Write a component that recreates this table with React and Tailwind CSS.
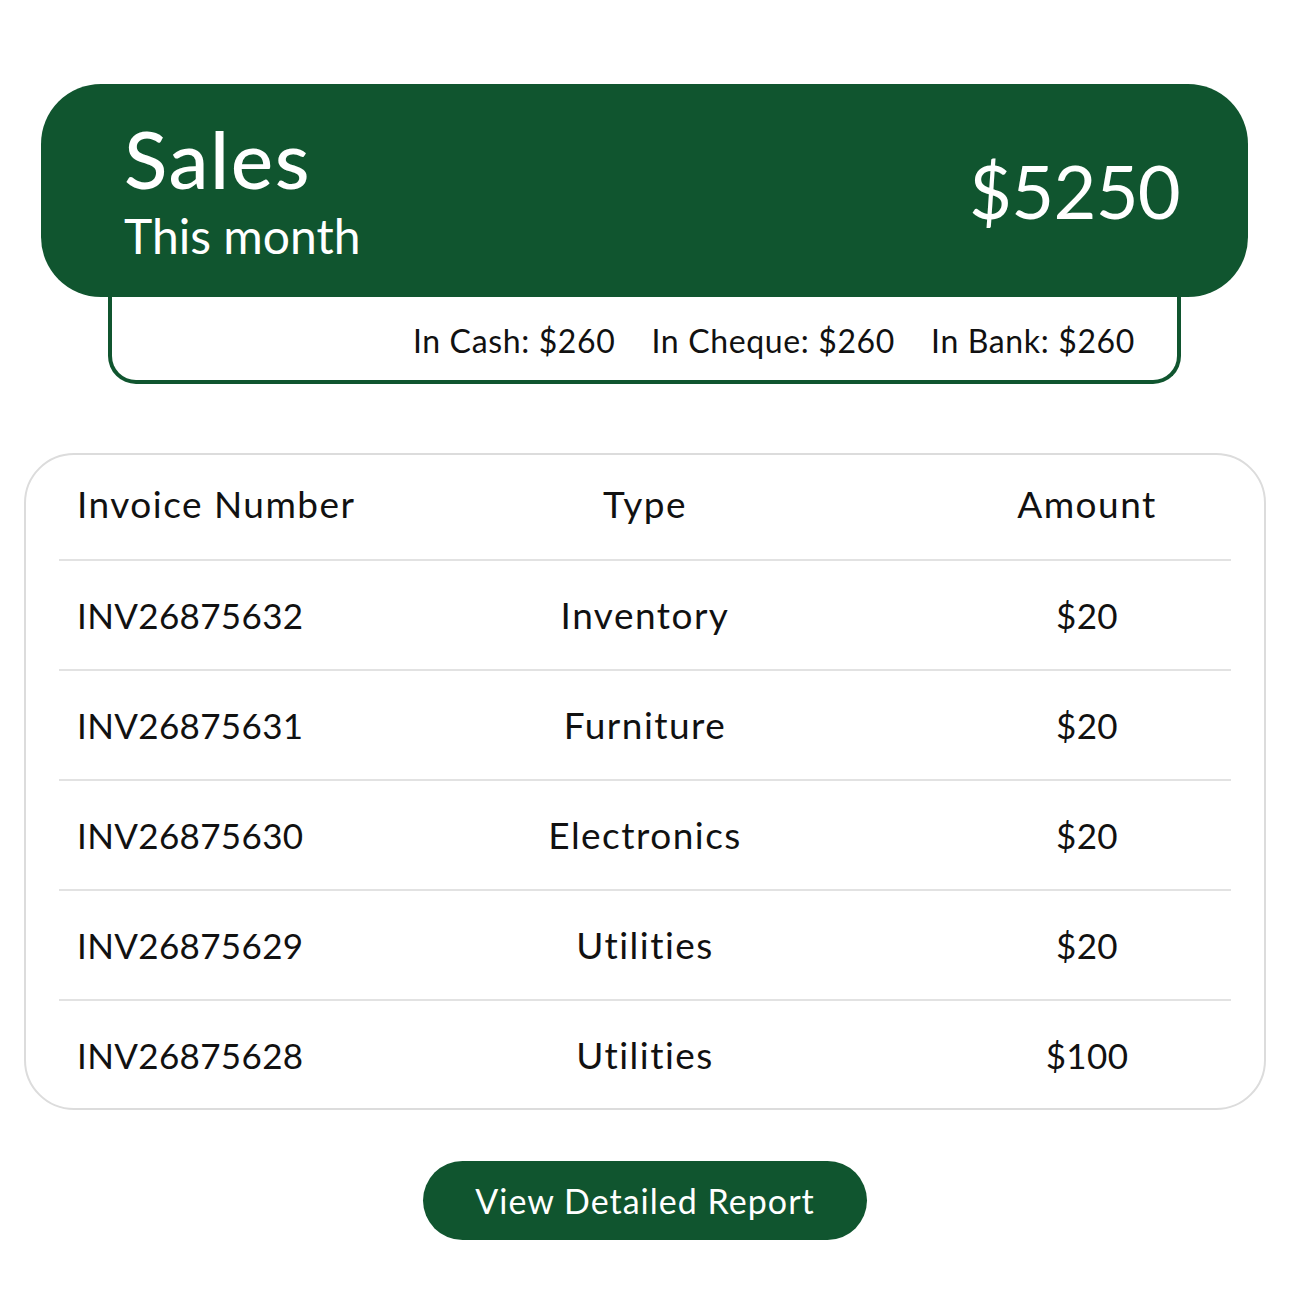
import React from 'react';

const rows = [
    { id: 'INV26875632', type: 'Inventory', amount: '$20' },
    { id: 'INV26875631', type: 'Furniture', amount: '$20' },
    { id: 'INV26875630', type: 'Electronics', amount: '$20' },
    { id: 'INV26875629', type: 'Utilities', amount: '$20' },
    { id: 'INV26875628', type: 'Utilities', amount: '$100' },
];

const App = () => {
    return (
        <div className="w-[1290px] h-[1290px] bg-white pt-[84px] font-['Lato','Open_Sans',sans-serif]">
            <div className="mx-[41px] w-[1207px]">
                <div className="h-[213px] bg-[#10552f] rounded-[60px] flex items-center justify-between pl-[83px] pr-[68px] text-white">
                    <div className="flex flex-col pt-[6px]">
                        <span className="text-[80px] leading-[80px] font-medium tracking-[0.02em] -mt-[6px]">Sales</span>
                        <span className="text-[48px] leading-[56px] mt-[10px]">This month</span>
                    </div>
                    <span className="text-[74px] leading-none tracking-[-0.01em]">$5250</span>
                </div>
                <div className="mx-[67px] h-[87px] border-4 border-t-0 border-[#10552f] rounded-b-[28px] flex items-center justify-end gap-[36px] pr-[42px] pt-[4px] text-[32px] tracking-[0.02em] text-[#111]">
                    <span>In Cash: $260</span>
                    <span>In Cheque: $260</span>
                    <span>In Bank: $260</span>
                </div>
            </div>

            <div className="mt-[69px] mx-[24px] w-[1242px] h-[657px] border-2 border-[#dcdcdc] rounded-[50px] px-[33px] text-[#111]">
                <div className="grid grid-cols-[288px_1fr_288px] h-[106px] items-center pb-[6px] border-b-2 border-[#e2e2e2] text-[37px] tracking-[0.04em]">
                    <span className="pl-[18px] whitespace-nowrap">Invoice Number</span>
                    <span className="text-center">Type</span>
                    <span className="text-center">Amount</span>
                </div>
                {rows.map((row, i) => (
                    <div
                        key={row.id}
                        className={`grid grid-cols-[288px_1fr_288px] items-center ${i < rows.length - 1 ? 'h-[110px] border-b-2 border-[#e2e2e2]' : 'h-[108px]'}`}
                    >
                        <span className="pl-[18px] whitespace-nowrap text-[35px] tracking-[0.01em]">{row.id}</span>
                        <span className="text-center text-[37px] tracking-[0.04em]">{row.type}</span>
                        <span className="text-center text-[35px] tracking-[0.01em]">{row.amount}</span>
                    </div>
                ))}
            </div>

            <div className="flex justify-center mt-[51px]">
                <button className="w-[444px] h-[79px] rounded-full bg-[#10552f] text-white text-[34px] tracking-[0.03em]">
                    View Detailed Report
                </button>
            </div>
        </div>
    );
};

export default App;
